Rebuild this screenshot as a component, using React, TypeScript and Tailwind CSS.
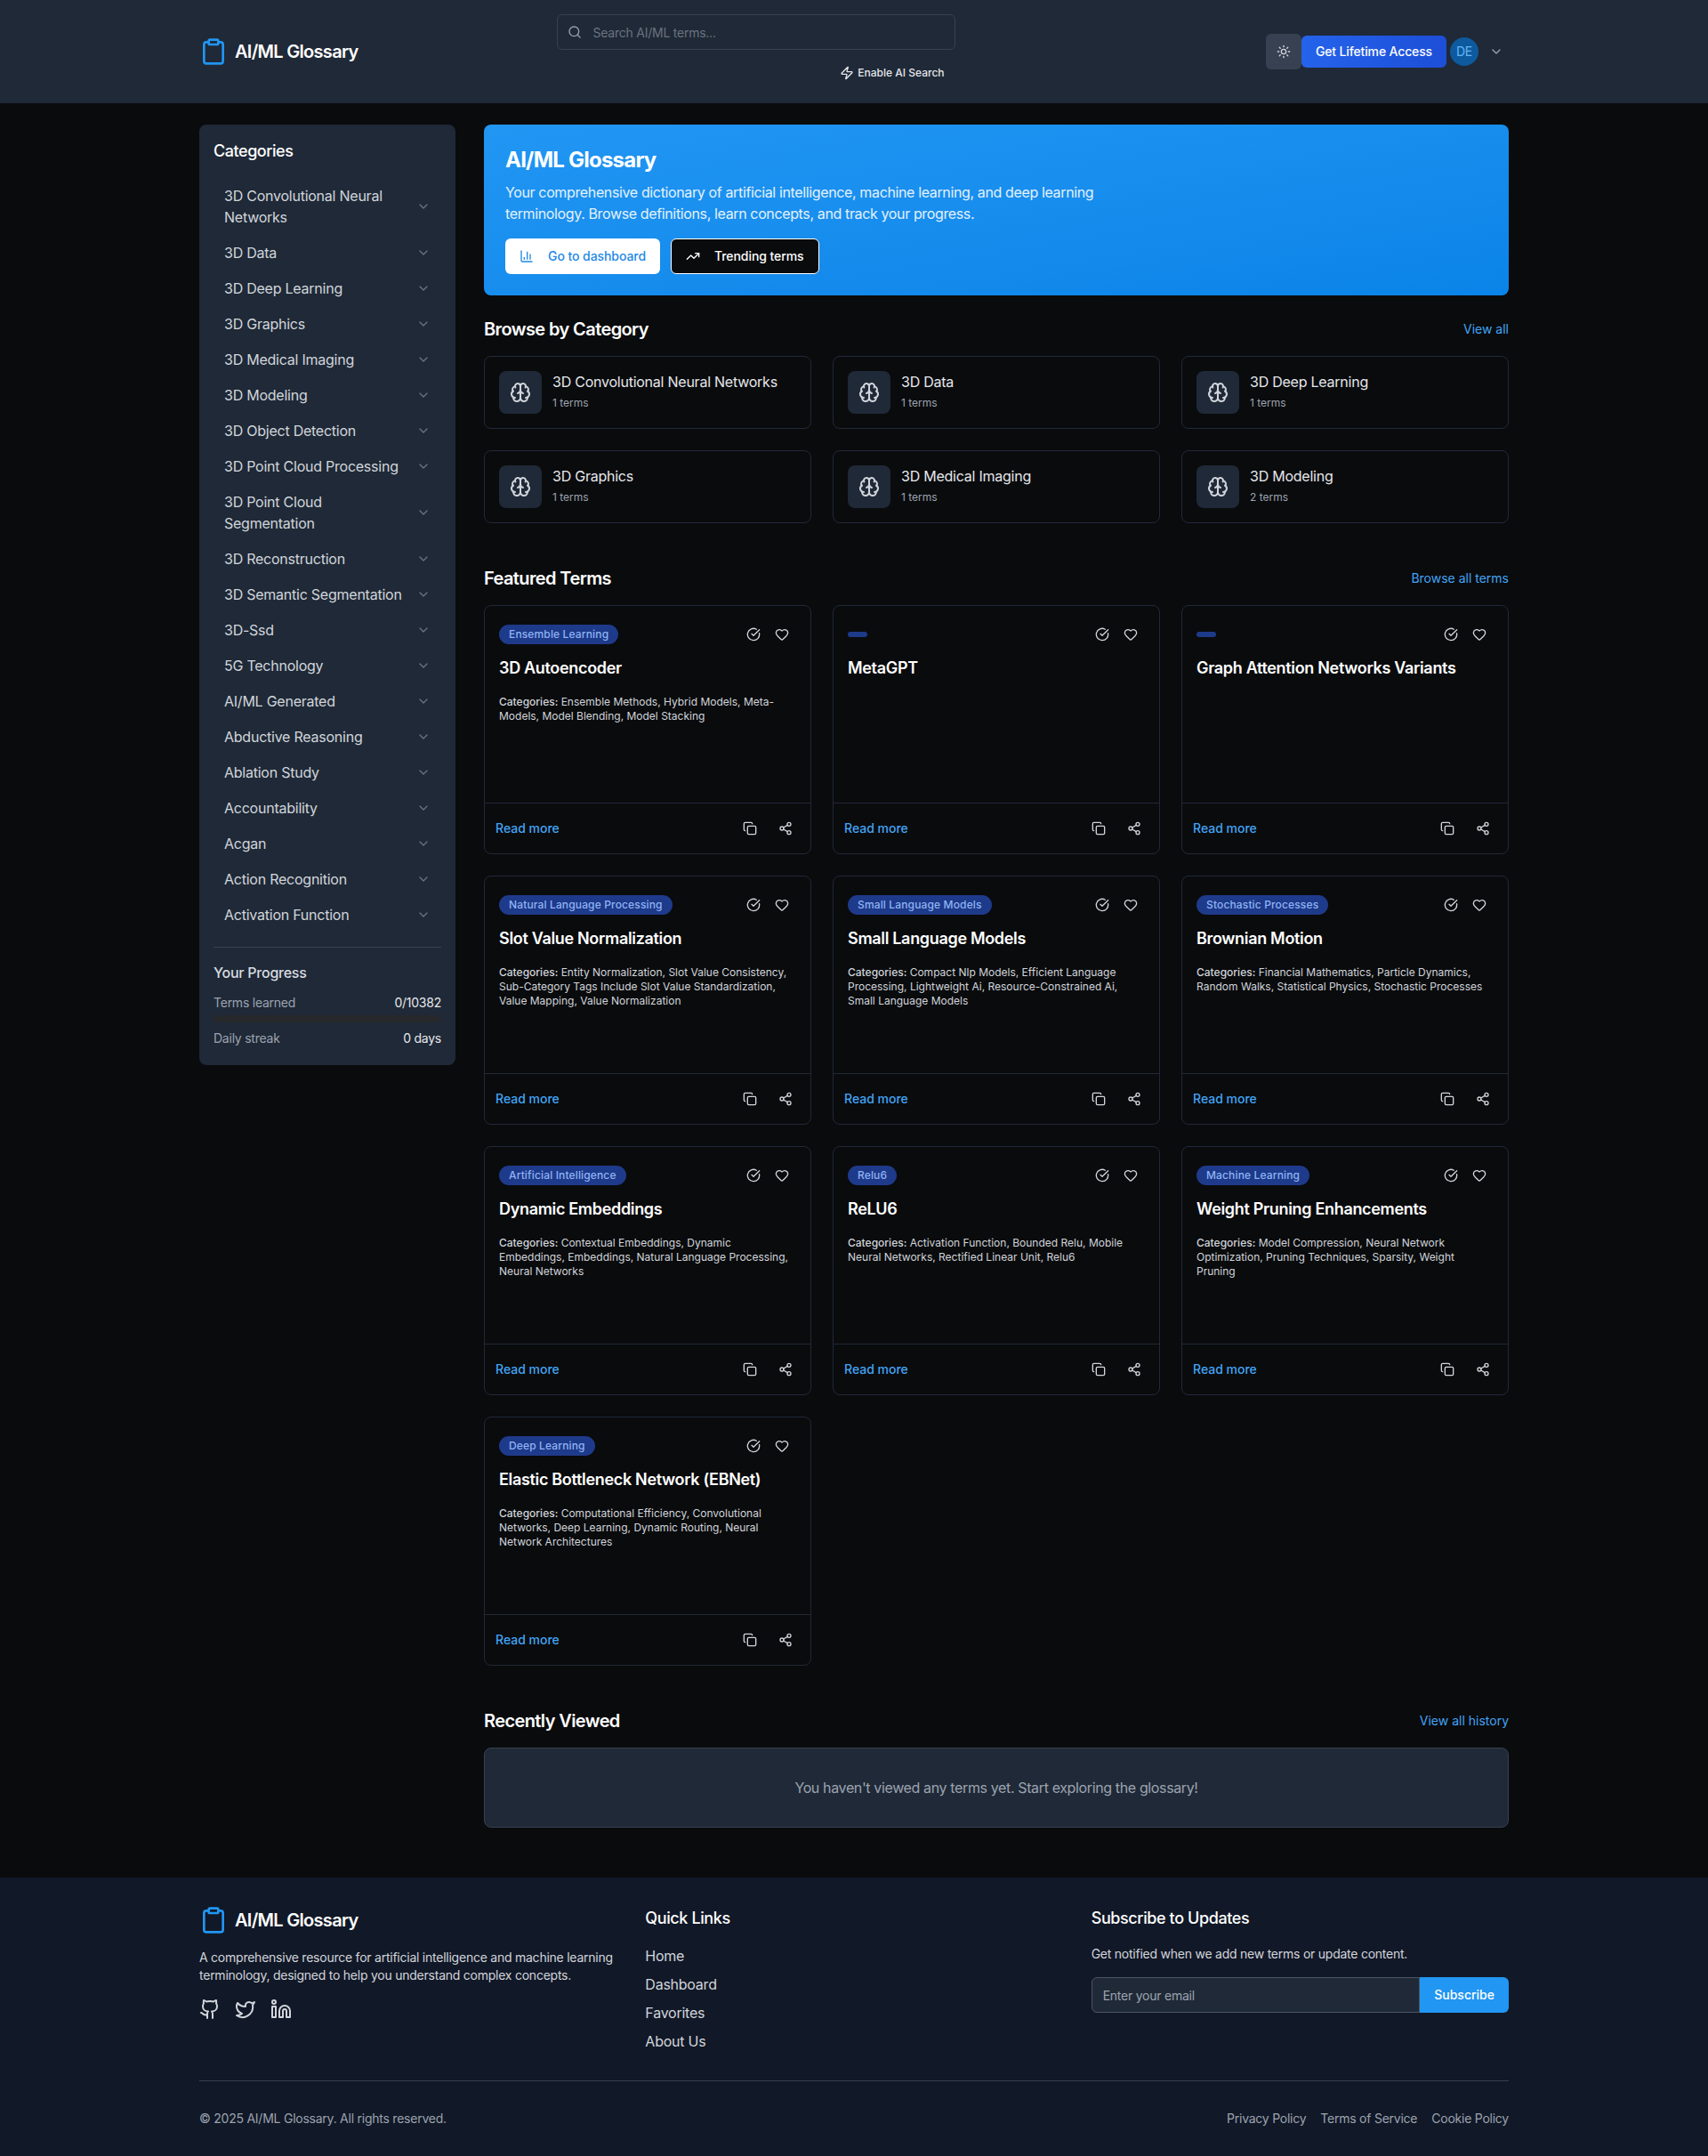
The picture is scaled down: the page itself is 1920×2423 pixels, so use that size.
import {
  ChevronDown,
  CircleCheckBig,
  Clipboard,
  Copy,
  Github,
  Heart,
  Linkedin,
  Search,
  Share2,
  Sun,
  TrendingUp,
  Twitter,
  Zap,
  BarChart3,
  Brain,
} from "lucide-react";

const SIDEBAR_CATEGORIES = [
  "3D Convolutional Neural Networks",
  "3D Data",
  "3D Deep Learning",
  "3D Graphics",
  "3D Medical Imaging",
  "3D Modeling",
  "3D Object Detection",
  "3D Point Cloud Processing",
  "3D Point Cloud Segmentation",
  "3D Reconstruction",
  "3D Semantic Segmentation",
  "3D-Ssd",
  "5G Technology",
  "AI/ML Generated",
  "Abductive Reasoning",
  "Ablation Study",
  "Accountability",
  "Acgan",
  "Action Recognition",
  "Activation Function",
];

const BROWSE_CATEGORIES = [
  { name: "3D Convolutional Neural Networks", count: 1 },
  { name: "3D Data", count: 1 },
  { name: "3D Deep Learning", count: 1 },
  { name: "3D Graphics", count: 1 },
  { name: "3D Medical Imaging", count: 1 },
  { name: "3D Modeling", count: 2 },
];

const FEATURED_TERMS = [
  {
    tag: "Ensemble Learning",
    title: "3D Autoencoder",
    categories: "Ensemble Methods, Hybrid Models, Meta-Models, Model Blending, Model Stacking",
  },
  { tag: "", title: "MetaGPT", categories: "" },
  { tag: "", title: "Graph Attention Networks Variants", categories: "" },
  {
    tag: "Natural Language Processing",
    title: "Slot Value Normalization",
    categories:
      "Entity Normalization, Slot Value Consistency, Sub-Category Tags Include Slot Value Standardization, Value Mapping, Value Normalization",
  },
  {
    tag: "Small Language Models",
    title: "Small Language Models",
    categories:
      "Compact Nlp Models, Efficient Language Processing, Lightweight Ai, Resource-Constrained Ai, Small Language Models",
  },
  {
    tag: "Stochastic Processes",
    title: "Brownian Motion",
    categories:
      "Financial Mathematics, Particle Dynamics, Random Walks, Statistical Physics, Stochastic Processes",
  },
  {
    tag: "Artificial Intelligence",
    title: "Dynamic Embeddings",
    categories:
      "Contextual Embeddings, Dynamic Embeddings, Embeddings, Natural Language Processing, Neural Networks",
  },
  {
    tag: "Relu6",
    title: "ReLU6",
    categories:
      "Activation Function, Bounded Relu, Mobile Neural Networks, Rectified Linear Unit, Relu6",
  },
  {
    tag: "Machine Learning",
    title: "Weight Pruning Enhancements",
    categories:
      "Model Compression, Neural Network Optimization, Pruning Techniques, Sparsity, Weight Pruning",
  },
  {
    tag: "Deep Learning",
    title: "Elastic Bottleneck Network (EBNet)",
    categories:
      "Computational Efficiency, Convolutional Networks, Deep Learning, Dynamic Routing, Neural Network Architectures",
  },
];

function Logo() {
  return (
    <div className="flex items-center gap-2">
      <Clipboard size={32} className="text-[#2196f3]" strokeWidth={2} />
      <span className="text-xl font-semibold tracking-[-0.035em] text-white">AI/ML Glossary</span>
    </div>
  );
}

function Header() {
  return (
    <header className="bg-[#1f2937]">
      <div className="mx-auto flex w-[1536px] items-center px-8 py-4">
        <Logo />
        <div className="ml-[223px] w-[448px]">
          <div className="relative">
            <Search size={16} className="absolute left-3 top-3 text-gray-400" />
            <input
              placeholder="Search AI/ML terms..."
              className="h-10 w-full rounded-md border border-[#374151] bg-transparent pl-10 pr-3 text-sm text-white outline-none placeholder:text-[#6b7280]"
            />
          </div>
          <div className="mt-2 flex justify-end">
            <button className="flex h-9 items-center gap-1 px-3 text-xs font-medium tracking-normal text-[#e5e7eb]">
              <Zap size={16} />
              Enable AI Search
            </button>
          </div>
        </div>
        <div className="ml-auto flex items-center">
          <button className="flex h-10 w-10 items-center justify-center rounded-md bg-[#374151] text-[#d1d5db]">
            <Sun size={16} />
          </button>
          <button className="h-9 rounded-md bg-gradient-to-r from-[#2563eb] to-[#1d4ed8] px-4 text-sm font-medium tracking-[-0.01em] text-white">
            Get Lifetime Access
          </button>
          <div className="ml-1 flex items-center gap-3">
            <div className="flex h-8 w-8 items-center justify-center rounded-full bg-[#0d5a9e] text-sm text-[#64b5f6]">
              DE
            </div>
            <ChevronDown size={16} className="mr-1.5 text-gray-400" />
          </div>
        </div>
      </div>
    </header>
  );
}

function Sidebar() {
  return (
    <aside className="w-72 shrink-0 self-start rounded-lg bg-[#1f2937] p-4 pb-5">
      <h2 className="mb-4 text-lg font-medium tracking-[-0.025em] text-white">Categories</h2>
      <ul>
        {SIDEBAR_CATEGORIES.map((name) => (
          <li key={name} className="flex items-center px-3 py-2 text-base text-[#d1d5db]">
            <span className="flex-1 pr-1">{name}</span>
            <ChevronDown size={16} className="shrink-0 text-[#6b7280]" />
          </li>
        ))}
      </ul>
      <div className="mt-4 border-t border-[#374151] pt-4">
        <h3 className="mb-3 text-base font-medium text-[#d9dce1]">Your Progress</h3>
        <div className="mb-1 flex justify-between text-sm">
          <span className="text-[#9ca3af]">Terms learned</span>
          <span className="text-[#e5e7eb]">0/10382</span>
        </div>
        <div className="mb-2 h-2 rounded-full bg-[#27282c]" />
        <div className="flex justify-between text-sm">
          <span className="text-[#9ca3af]">Daily streak</span>
          <span className="text-[#e5e7eb]">0 days</span>
        </div>
      </div>
    </aside>
  );
}

function Hero() {
  return (
    <section className="mb-6 rounded-lg bg-gradient-to-br from-[#2196f3] to-[#0a84e8] p-6 text-white">
      <h1 className="mb-2 text-2xl font-bold tracking-[-0.032em]">AI/ML Glossary</h1>
      <p className="mb-4 max-w-2xl text-base tracking-[-0.023em] text-[#e3f2fd]">
        Your comprehensive dictionary of artificial intelligence, machine learning, and deep learning
        terminology. Browse definitions, learn concepts, and track your progress.
      </p>
      <div className="flex gap-3">
        <button className="flex h-10 items-center gap-4 rounded-md bg-white px-4 text-sm font-medium tracking-[-0.005em] text-[#1e88e5]">
          <BarChart3 size={16} />
          Go to dashboard
        </button>
        <button className="flex h-10 items-center gap-4 rounded-md border border-white bg-[#0a0b0d] px-4 text-sm font-medium tracking-[-0.005em] text-white">
          <TrendingUp size={16} />
          Trending terms
        </button>
      </div>
    </section>
  );
}

function SectionHeading({ title, link }: { title: string; link: string }) {
  return (
    <div className="mb-4 flex items-center justify-between">
      <h2 className="text-xl font-semibold tracking-[-0.03em] text-white">{title}</h2>
      <a className="text-sm tracking-normal text-[#42a5f5]">{link}</a>
    </div>
  );
}

function CategoryCard({ name, count }: { name: string; count: number }) {
  return (
    <div className="flex items-center gap-3 rounded-lg border border-[#1f2937] p-4">
      <div className="flex h-12 w-12 shrink-0 items-center justify-center rounded-lg bg-[#1f2937]">
        <Brain size={24} className="text-[#d1d5db]" />
      </div>
      <div>
        <div className="text-base text-[#e5e7eb]">{name}</div>
        <div className="text-xs leading-6 tracking-normal text-[#9ca3af]">{count} terms</div>
      </div>
    </div>
  );
}

function TermCard({ tag, title, categories }: { tag: string; title: string; categories: string }) {
  return (
    <div className="flex h-[280px] flex-col rounded-lg border border-[#1f2937]">
      <div className="flex-1 p-4">
        <div className="mb-2 flex items-center justify-between">
          <span className="inline-flex items-center rounded-full border border-transparent bg-[#1e3a8a] px-2.5 py-0.5 text-xs font-medium tracking-[0.012em] text-[#8fb4f5]">
            {tag}
          </span>
          <div className="flex text-[#d1d5db]">
            <button className="p-2">
              <CircleCheckBig size={16} />
            </button>
            <button className="p-2">
              <Heart size={16} />
            </button>
          </div>
        </div>
        <h3 className="mb-4 text-lg font-semibold tracking-[-0.018em] text-white">{title}</h3>
        {categories && (
          <p className="text-xs tracking-normal text-[#d1d5db]">
            <span className="font-medium">Categories:</span> {categories}
          </p>
        )}
      </div>
      <div className="flex items-center justify-between border-t border-[#1f2937] p-3">
        <a className="text-sm font-medium tracking-normal text-[#42a5f5]">Read more</a>
        <div className="flex gap-2 text-[#d1d5db]">
          <button className="p-2">
            <Copy size={16} />
          </button>
          <button className="p-2">
            <Share2 size={16} />
          </button>
        </div>
      </div>
    </div>
  );
}

function Footer() {
  return (
    <footer className="bg-[#111827]">
      <div className="mx-auto w-[1536px] px-8 py-8">
        <div className="grid grid-cols-3 gap-8">
          <div>
            <div className="mb-4">
              <Logo />
            </div>
            <p className="mb-4 text-sm text-[#d1d5db]">
              A comprehensive resource for artificial intelligence and machine learning terminology,
              designed to help you understand complex concepts.
            </p>
            <div className="flex gap-4 text-[#d1d5db]">
              <Github size={24} />
              <Twitter size={24} />
              <Linkedin size={24} />
            </div>
          </div>
          <div>
            <h3 className="mb-4 text-lg font-medium tracking-[-0.022em] text-white">Quick Links</h3>
            <ul className="space-y-2 text-base text-[#d1d5db]">
              <li>Home</li>
              <li>Dashboard</li>
              <li>Favorites</li>
              <li>About Us</li>
            </ul>
          </div>
          <div>
            <h3 className="mb-4 text-lg font-medium tracking-[-0.022em] text-white">Subscribe to Updates</h3>
            <p className="mb-4 text-sm text-[#d1d5db]">Get notified when we add new terms or update content.</p>
            <div className="flex">
              <input
                placeholder="Enter your email"
                className="h-10 min-w-0 flex-1 rounded-l-md border border-[#4b5563] bg-[#1f2937] px-3 text-sm text-white outline-none placeholder:text-[#9ca3af]"
              />
              <button className="h-10 rounded-r-md bg-[#2196f3] px-4 text-sm font-medium tracking-normal text-white">
                Subscribe
              </button>
            </div>
          </div>
        </div>
        <div className="mt-8 flex items-center justify-between border-t border-[#374151] pt-8 text-sm text-[#9ca3af]">
          <span>© 2025 AI/ML Glossary. All rights reserved.</span>
          <div className="flex gap-4">
            <a>Privacy Policy</a>
            <a>Terms of Service</a>
            <a>Cookie Policy</a>
          </div>
        </div>
      </div>
    </footer>
  );
}

export default function App() {
  return (
    <div className="min-h-screen bg-[#0a0b0d] font-['Inter',sans-serif] tracking-[-0.015em]">
      <Header />
      <div className="mx-auto flex w-[1536px] gap-8 px-8 pb-14 pt-6">
        <Sidebar />
        <main className="min-w-0 flex-1">
          <Hero />
          <section className="mb-12">
            <SectionHeading title="Browse by Category" link="View all" />
            <div className="grid grid-cols-3 gap-6">
              {BROWSE_CATEGORIES.map((c) => (
                <CategoryCard key={c.name} {...c} />
              ))}
            </div>
          </section>
          <section className="mb-12">
            <SectionHeading title="Featured Terms" link="Browse all terms" />
            <div className="grid grid-cols-3 gap-6">
              {FEATURED_TERMS.map((t) => (
                <TermCard key={t.title} {...t} />
              ))}
            </div>
          </section>
          <section>
            <SectionHeading title="Recently Viewed" link="View all history" />
            <div className="rounded-lg border border-[#374151] bg-[#1f2937] p-8 text-center text-base tracking-[-0.023em] text-[#9ca3af]">
              You haven't viewed any terms yet. Start exploring the glossary!
            </div>
          </section>
        </main>
      </div>
      <Footer />
    </div>
  );
}
